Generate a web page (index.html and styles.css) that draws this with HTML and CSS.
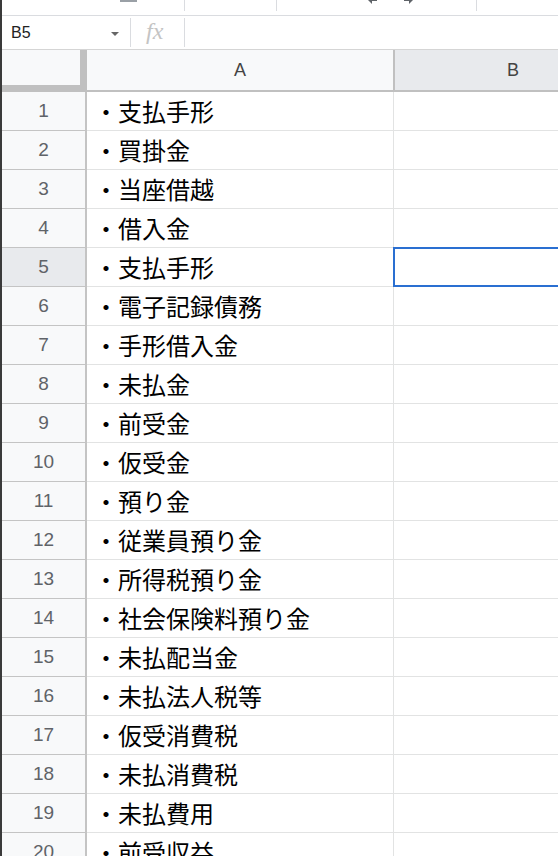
FILE: index.html
```html
<!DOCTYPE html>
<html lang="ja">
<head>
<meta charset="utf-8">
<title>Sheet</title>
<link rel="stylesheet" href="styles.css">
</head>
<body>
<div class="app">
  <div class="toolbar">
    <span class="tb-bar"></span>
    <span class="tb-sep s1"></span>
    <span class="tb-sep s2"></span>
    <svg class="tb-icon undo" width="18" height="18" viewBox="0 0 18 18"><path d="M3 14 L7 10 L7 13 L12 13 L12 15 L7 15 L7 18 Z" fill="#5f6368"/></svg>
    <svg class="tb-icon redo" width="18" height="18" viewBox="0 0 18 18"><path d="M15 14 L11 10 L11 13 L6 13 L6 15 L11 15 L11 18 Z" fill="#5f6368"/></svg>
    <span class="tb-sep s3"></span>
  </div>
  <div class="formula-bar">
    <div class="name-box">
      <span class="cell-ref">B5</span>
      <span class="dropdown"></span>
    </div>
    <div class="fx">fx</div>
    <div class="formula-input"></div>
  </div>
  <div class="grid">
    <div class="header-row">
      <div class="corner"></div>
      <div class="col-head col-a">A</div>
      <div class="col-head col-b selected">B</div>
    </div>
    <div class="row"><div class="rh">1</div><div class="cell a">・支払手形</div><div class="cell b"></div></div>
    <div class="row"><div class="rh">2</div><div class="cell a">・買掛金</div><div class="cell b"></div></div>
    <div class="row"><div class="rh">3</div><div class="cell a">・当座借越</div><div class="cell b"></div></div>
    <div class="row"><div class="rh">4</div><div class="cell a">・借入金</div><div class="cell b"></div></div>
    <div class="row"><div class="rh selected">5</div><div class="cell a">・支払手形</div><div class="cell b active"><div class="selection"></div></div></div>
    <div class="row"><div class="rh">6</div><div class="cell a">・電子記録債務</div><div class="cell b"></div></div>
    <div class="row"><div class="rh">7</div><div class="cell a">・手形借入金</div><div class="cell b"></div></div>
    <div class="row"><div class="rh">8</div><div class="cell a">・未払金</div><div class="cell b"></div></div>
    <div class="row"><div class="rh">9</div><div class="cell a">・前受金</div><div class="cell b"></div></div>
    <div class="row"><div class="rh">10</div><div class="cell a">・仮受金</div><div class="cell b"></div></div>
    <div class="row"><div class="rh">11</div><div class="cell a">・預り金</div><div class="cell b"></div></div>
    <div class="row"><div class="rh">12</div><div class="cell a">・従業員預り金</div><div class="cell b"></div></div>
    <div class="row"><div class="rh">13</div><div class="cell a">・所得税預り金</div><div class="cell b"></div></div>
    <div class="row"><div class="rh">14</div><div class="cell a">・社会保険料預り金</div><div class="cell b"></div></div>
    <div class="row"><div class="rh">15</div><div class="cell a">・未払配当金</div><div class="cell b"></div></div>
    <div class="row"><div class="rh">16</div><div class="cell a">・未払法人税等</div><div class="cell b"></div></div>
    <div class="row"><div class="rh">17</div><div class="cell a">・仮受消費税</div><div class="cell b"></div></div>
    <div class="row"><div class="rh">18</div><div class="cell a">・未払消費税</div><div class="cell b"></div></div>
    <div class="row"><div class="rh">19</div><div class="cell a">・未払費用</div><div class="cell b"></div></div>
    <div class="row"><div class="rh">20</div><div class="cell a">・前受収益</div><div class="cell b"></div></div>
  </div>
</div>
</body>
</html>
```

FILE: styles.css
```css
html, body {
  margin: 0;
  padding: 0;
  background: #fff;
  overflow: hidden;
}
.app {
  width: 556px;
  height: 856px;
  border-left: 2px solid #3a3a3a;
  overflow: hidden;
  font-family: "Liberation Sans", Arial, sans-serif;
}

/* top toolbar (cut off) */
.toolbar {
  height: 15px;
  border-bottom: 1px solid #dadce0;
  display: flex;
  align-items: flex-start;
  overflow: hidden;
}
.tb-bar {
  width: 17px;
  height: 2px;
  background: #9aa0a6;
  margin-left: 118px;
  flex: none;
}
.tb-sep {
  width: 1px;
  height: 11px;
  background: #dadce0;
  flex: none;
}
.tb-sep.s1 { margin-left: 47px; }
.tb-sep.s2 { margin-left: 91px; }
.tb-icon {
  flex: none;
  margin-top: -14px;
}
.tb-icon.undo { margin-left: 88px; }
.tb-icon.redo { margin-left: 15px; }
.tb-sep.s3 { margin-left: 60px; }

/* formula bar */
.formula-bar {
  height: 33px;
  border-bottom: 1px solid #d5d5d5;
  display: flex;
  align-items: center;
}
.name-box {
  width: 128px;
  height: 29px;
  border-right: 1px solid #dadce0;
  display: flex;
  align-items: center;
  padding-left: 9px;
  box-sizing: border-box;
  width: 129px;
}
.cell-ref {
  font-size: 16px;
  color: #222;
  flex: 1;
}
.dropdown {
  width: 0;
  height: 0;
  border-left: 4px solid transparent;
  border-right: 4px solid transparent;
  border-top: 4px solid #666;
  margin-right: 11px;
  margin-top: 2px;
}
.fx {
  width: 54px;
  height: 29px;
  box-sizing: border-box;
  border-right: 1px solid #dadce0;
  font-family: "Liberation Serif", "Times New Roman", serif;
  font-style: italic;
  font-size: 24px;
  color: #c4c4c4;
  padding-left: 15px;
  line-height: 27px;
}
.formula-input { flex: 1; }

/* grid */
.grid {
  display: flex;
  flex-direction: column;
}
.header-row {
  display: flex;
  height: 42px;
  flex: none;
}
.corner {
  width: 78px;
  height: 35px;
  background: #f8f9fa;
  border-right: 7px solid #c0c0c0;
  border-bottom: 7px solid #c0c0c0;
  flex: none;
}
.col-head {
  height: 40px;
  background: #f8f9fa;
  border-bottom: 2px solid #c0c0c0;
  display: flex;
  align-items: center;
  justify-content: center;
  font-size: 18px;
  color: #444;
  flex: none;
}
.col-a {
  width: 306px;
  border-right: 2px solid #c0c0c0;
}
.col-b {
  width: 236px;
}
.col-head.selected {
  background: #e8eaed;
}

.row {
  display: flex;
  height: 39px;
  flex: none;
}
.rh {
  width: 83px;
  height: 38px;
  background: #f8f9fa;
  border-right: 2px solid #c4c4c4;
  border-bottom: 1px solid #c4c4c4;
  display: flex;
  align-items: center;
  justify-content: center;
  font-size: 19px;
  color: #5f6368;
  flex: none;
}
.rh.selected {
  background: #e8eaed;
}
.cell {
  height: 38px;
  border-bottom: 1px solid #e2e3e3;
  flex: none;
}
.cell.a {
  width: 299px;
  padding-left: 7px;
  border-right: 1px solid #e2e3e3;
  display: flex;
  align-items: center;
  font-family: "Noto Sans CJK JP", "Noto Sans", sans-serif;
  font-size: 24px;
  line-height: 1;
  color: #000;
  white-space: nowrap;
}
.cell.b {
  width: 240px;
}
.cell.active {
  position: relative;
}
.selection {
  position: absolute;
  top: -1px;
  left: -1px;
  right: -10px;
  bottom: -1px;
  border: 2px solid #2a6fd1;
}
```
